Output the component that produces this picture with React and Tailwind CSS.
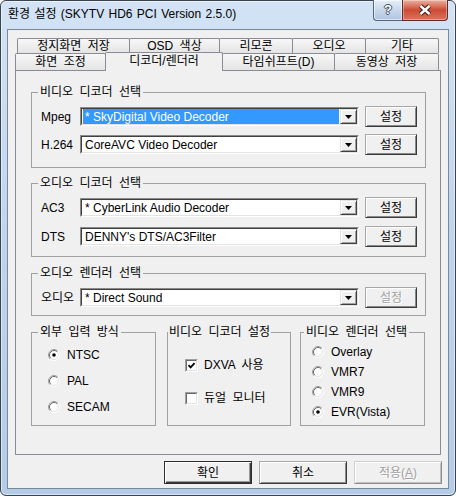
import React from "react";

const FONT = "font-['Liberation_Sans','Noto_Sans_CJK_KR',sans-serif]";
const KO = "[word-spacing:3px]";

const BTN =
  "flex items-center justify-center bg-[#f0f0f0] border border-t-[#a8a8a8] border-l-[#a8a8a8] border-r-[#3a3a3a] border-b-[#3a3a3a] shadow-[inset_1px_1px_0_#fff,inset_-1px_-1px_0_#8a8a8a]";

const BACK_TABS = [
  { label: "정지화면 저장", w: "w-[113px]" },
  { label: "OSD 색상", w: "w-[91px]" },
  { label: "리모콘", w: "w-[74px]" },
  { label: "오디오", w: "w-[74px]" },
  { label: "기타", w: "w-[74px]" },
];

const FRONT_TABS = [
  { label: "화면 조정", w: "w-[91px]" },
  { label: "디코더/렌더러", w: "w-[118px]", sel: true },
  { label: "타임쉬프트(D)", w: "w-[113px]" },
  { label: "동영상 저장", w: "w-[105px]" },
];

export default function App() {
  return (
    <div className={`w-[456px] h-[496px] ${FONT} text-[12px] leading-[14px] text-black`}>
      <div className="w-[456px] h-[496px] flex flex-col rounded-[6px] border border-[#3a4350] bg-linear-to-b from-[#d3e3f5] via-[#bed4ee] to-[#b5cce8] shadow-[inset_0_0_0_1px_rgba(255,255,255,0.5)]">
        {/* title bar */}
        <div className="h-[28px] shrink-0 flex items-start">
          <span className="ml-[7px] mt-[6px] [word-spacing:1px]">환경 설정 (SKYTV HD6 PCI Version 2.5.0)</span>
          <div className="ml-auto mr-[7px] -mt-px flex h-[21px]">
            <div className="w-[29px] h-full flex items-center justify-center rounded-bl-[4px] border border-t-0 border-r-0 border-[#55657c] bg-linear-to-b from-[#e6eef8] via-[#c8d7eb] to-[#b0c4df] shadow-[inset_0_0_0_1px_rgba(255,255,255,0.55)]">
              <span className="font-bold text-[13px] text-white [text-shadow:1px_0_#3d4b5e,-1px_0_#3d4b5e,0_1px_#3d4b5e,0_-1px_#3d4b5e]">
                ?
              </span>
            </div>
            <div className="w-[46px] h-full flex items-center justify-center rounded-br-[4px] border border-t-0 border-[#5b2f28] bg-linear-to-b from-[#eab0a2] via-[#cc4a33] to-[#d8745a] shadow-[inset_0_0_0_1px_rgba(255,255,255,0.35)]">
              <svg width="16" height="12" viewBox="0 0 16 12">
                <path d="M3.5 2 L12.5 10 M12.5 2 L3.5 10" stroke="#3b1c17" strokeWidth="4.5" />
                <path d="M3.5 2 L12.5 10 M12.5 2 L3.5 10" stroke="#fff" strokeWidth="2.4" />
              </svg>
            </div>
          </div>
        </div>

        {/* client area */}
        <div className="mx-[6px] h-[460px] shrink-0 flex flex-col pt-[8px] pl-[7px] bg-[#f0f0f0] border border-[#7b8898]">
          <div className={`flex h-[15px] ml-[2px] ${KO}`}>
            {BACK_TABS.map((t, i) => (
              <div
                key={t.label}
                className={`${t.w} ${i ? "-ml-px" : ""} h-[15px] flex items-center justify-center rounded-t-[2px] border border-b-0 border-[#898c95] bg-linear-to-b from-[#f7f7f7] to-[#e4e4e4]`}
              >
                {t.label}
              </div>
            ))}
          </div>
          <div className={`flex h-[17px] items-start ${KO}`}>
            {FRONT_TABS.map((t, i) =>
              t.sel ? (
                <div
                  key={t.label}
                  className={`${t.w} -ml-px relative z-10 -mt-px h-[19px] pb-[2px] flex items-center justify-center rounded-t-[2px] border border-b-0 border-[#898c95] bg-[#f0f0f0]`}
                >
                  {t.label}
                </div>
              ) : (
                <div
                  key={t.label}
                  className={`${t.w} ${i ? "-ml-px" : ""} h-[17px] flex items-center justify-center rounded-t-[2px] border border-b-0 border-[#898c95] bg-linear-to-b from-[#f7f7f7] to-[#e4e4e4]`}
                >
                  {t.label}
                </div>
              )
            )}
          </div>

          {/* tab page */}
          <div className="w-[426px] h-[385px] shrink-0 flex flex-col pt-[14px] pl-[15px] border border-[#898c95] bg-[#f0f0f0]">
            <Group title="비디오 디코더 선택" className="w-[395px]">
              <div className="flex flex-col gap-[7px] pt-[7px] pb-[12px] pl-[9px]">
                <ComboRow label="Mpeg" value="* SkyDigital Video Decoder" selected />
                <ComboRow label="H.264" value="CoreAVC Video Decoder" />
              </div>
            </Group>

            <Group title="오디오 디코더 선택" className="w-[395px] mt-[8px]">
              <div className="flex flex-col gap-[8px] pt-[7px] pb-[9px] pl-[9px]">
                <ComboRow label="AC3" value="* CyberLink Audio Decoder" />
                <ComboRow label="DTS" value="DENNY's DTS/AC3Filter" />
              </div>
            </Group>

            <Group title="오디오 렌더러 선택" className="w-[395px] mt-[9px]">
              <div className="flex flex-col pt-[7px] pb-[7px] pl-[9px]">
                <ComboRow label="오디오" value="* Direct Sound" disabled />
              </div>
            </Group>

            <div className="flex mt-[9px]">
              <Group title="외부 입력 방식" className="w-[125px]">
                <div className="h-[86px] flex flex-col gap-[12px] pt-[9px] pl-[16px]">
                  <Radio label="NTSC" checked />
                  <Radio label="PAL" />
                  <Radio label="SECAM" />
                </div>
              </Group>
              <Group title="비디오 디코더 설정" className="w-[124px] ml-[11px]" legend="ml-0 px-px">
                <div className="h-[86px] flex flex-col gap-[19px] pt-[19px] pl-[17px]">
                  <Check label="DXVA 사용" checked />
                  <Check label="듀얼 모니터" />
                </div>
              </Group>
              <Group title="비디오 렌더러 선택" className="w-[125px] ml-[9px]" legend="ml-[3px] px-[2px]">
                <div className="h-[86px] flex flex-col gap-[6px] pt-[6px] pl-[11px]">
                  <Radio label="Overlay" />
                  <Radio label="VMR7" />
                  <Radio label="VMR9" />
                  <Radio label="EVR(Vista)" checked />
                </div>
              </Group>
            </div>
          </div>

          {/* dialog buttons */}
          <div className="flex justify-end gap-[7px] mt-[6px] pr-[6px]">
            <button className="w-[88px] h-[23px] flex items-center justify-center bg-[#f0f0f0] border border-[#2e2e2e] shadow-[inset_1px_1px_0_#fff,inset_-1px_-1px_0_#3a3a3a,inset_-2px_-2px_0_#9a9a9a]">
              확인
            </button>
            <button className={`w-[88px] h-[23px] ${BTN}`}>취소</button>
            <button className="w-[88px] h-[23px] flex items-center justify-center bg-[#f0f0f0] border border-t-[#d0d0d0] border-l-[#d0d0d0] border-r-[#8c8c8c] border-b-[#8c8c8c] shadow-[inset_1px_1px_0_#fff,inset_-1px_-1px_0_#c0c0c0] text-[#a0a0a0] [text-shadow:1px_1px_0_#fff]">
              적용(<u>A</u>)
            </button>
          </div>
        </div>
      </div>
    </div>
  );
}

function Group({ title, className = "", legend = "ml-[6px] px-[2px]", children }) {
  return (
    <fieldset className={`border border-[#a0a0a0] ${className}`}>
      <legend className={`${legend} leading-[14px] ${KO}`}>{title}</legend>
      {children}
    </fieldset>
  );
}

function ComboRow({ label, value, selected, disabled }) {
  return (
    <div className="flex items-center h-[21px]">
      <span className="w-[39px] shrink-0">{label}</span>
      <div className="w-[279px] h-[19px] shrink-0 border border-t-[#8a8a8a] border-l-[#8a8a8a] border-r-white border-b-white">
        <div className="h-full flex border border-t-[#404040] border-l-[#404040] border-r-[#e3e3e3] border-b-[#e3e3e3] bg-white">
          <div
            className={`flex-1 ml-px mr-px flex items-center pl-[2px] whitespace-nowrap overflow-hidden ${
              selected ? "bg-[#3399ff] text-white" : ""
            }`}
          >
            {value}
          </div>
          <div className="w-[17px] h-full flex items-center justify-center bg-[#f0f0f0] border border-t-[#e3e3e3] border-l-[#e3e3e3] border-r-[#404040] border-b-[#404040] shadow-[inset_1px_1px_0_#fff,inset_-1px_-1px_0_#a0a0a0]">
            <svg width="7" height="4" viewBox="0 0 7 4">
              <polygon points="0,0 7,0 3.5,4" fill="#000" />
            </svg>
          </div>
        </div>
      </div>
      <button
        className={`ml-[6px] w-[52px] h-[21px] shrink-0 ${BTN} ${
          disabled ? "text-[#a0a0a0] [text-shadow:1px_1px_0_#fff]" : ""
        }`}
      >
        설정
      </button>
    </div>
  );
}

function Radio({ label, checked }) {
  return (
    <div className="flex items-center h-[14px]">
      <svg width="12" height="12" viewBox="0 0 12 12" className="shrink-0">
        <circle cx="6" cy="6" r="5" fill="#fdfdfd" />
        <path d="M2.11 9.89 A5.5 5.5 0 0 1 9.89 2.11" stroke="#a0a0a0" fill="none" />
        <path d="M9.89 2.11 A5.5 5.5 0 0 1 2.11 9.89" stroke="#ffffff" fill="none" />
        <path d="M2.82 9.18 A4.5 4.5 0 0 1 9.18 2.82" stroke="#6a6a6a" fill="none" />
        <path d="M9.18 2.82 A4.5 4.5 0 0 1 2.82 9.18" stroke="#e3e3e3" fill="none" />
        {checked && <circle cx="6" cy="6" r="1.8" fill="#000" />}
      </svg>
      <span className="ml-[7px] whitespace-nowrap">{label}</span>
    </div>
  );
}

function Check({ label, checked }) {
  return (
    <div className="flex items-center h-[14px]">
      <div className="w-[13px] h-[13px] shrink-0 border border-t-[#a0a0a0] border-l-[#a0a0a0] border-r-white border-b-white">
        <div className="w-full h-full flex items-center justify-center bg-white border border-t-[#6a6a6a] border-l-[#6a6a6a] border-r-[#e3e3e3] border-b-[#e3e3e3]">
          {checked && (
            <svg width="9" height="9" viewBox="0 0 9 9">
              <path d="M1.5 4.2 L3.6 6.4 L7.6 2.2" stroke="#000" strokeWidth="1.8" fill="none" />
            </svg>
          )}
        </div>
      </div>
      <span className={`ml-[6px] whitespace-nowrap ${KO}`}>{label}</span>
    </div>
  );
}
